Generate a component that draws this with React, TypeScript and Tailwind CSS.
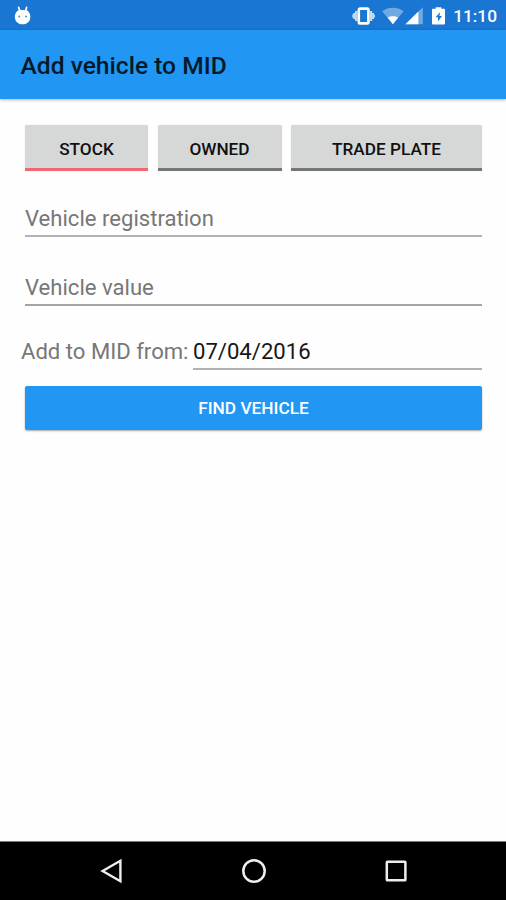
import React from 'react';

function MascotIcon() {
  return (
    <svg width="20" height="22" viewBox="0 0 20 22" className="shrink-0">
      <path d="M5.6 2.4 L6.8 5.8 M13.6 2.4 L12.6 5.8" stroke="#fff" strokeWidth="1.7" strokeLinecap="round" />
      <path
        d="M4.2 6 C5.6 4.6 13.6 4.6 15 6 C17 8 17.8 11 17.1 13.8 C16.4 17.4 13.4 19.3 9.6 19.3 C5.8 19.3 2.8 17.4 2.1 13.8 C1.4 11 2.2 8 4.2 6 Z"
        fill="#fff"
      />
      <circle cx="6.2" cy="11.4" r="1" fill="#4a92dd" />
      <circle cx="13" cy="11.4" r="1" fill="#4a92dd" />
    </svg>
  );
}

function StatusIcons() {
  return (
    <svg width="98" height="20" viewBox="0 0 98 20" className="shrink-0">
      {/* vibrate */}
      <path d="M0 10 L1.4 7 H3 V5 H5.4 V15 H3 V13 H1.4 Z M23.2 10 L21.8 7 H20.2 V5 H17.8 V15 H20.2 V13 H21.8 Z" fill="#fff" opacity=".72" />
      <rect x="6.8" y="2.6" width="9.6" height="14.8" rx="1.2" fill="#1976d2" stroke="#fff" strokeWidth="2.6" />
      {/* wifi */}
      <path d="M30.2 5.2 C36 .6 45.8 .6 51.6 5.2 L40.9 18.3 Z" fill="#fff" opacity=".38" />
      <path d="M35.6 11.5 C38.6 9.9 43.2 9.9 46.2 11.5 L40.9 18.3 Z" fill="#fff" />
      {/* cellular */}
      <path d="M53.4 18.3 L70.8 1.2 V18.3 Z" fill="#fff" opacity=".38" />
      <path d="M53.4 18.3 L66.4 5.5 V18.3 Z" fill="#fff" />
      {/* battery */}
      <path d="M80.9 2.8 H83.7 V1.2 H89.3 V2.8 H92.1 Q93 2.8 93 3.7 V17.6 Q93 18.5 92.1 18.5 H80.9 Q80 18.5 80 17.6 V3.7 Q80 2.8 80.9 2.8 Z" fill="#fff" />
      <path d="M88.2 6 L83.6 11.2 H86 V15.4 L90 9.9 H87.4 Z" fill="#1976d2" />
    </svg>
  );
}

function ToggleButton({ label, width, selected = false }: { label: string; width: string; selected?: boolean }) {
  return (
    <button
      className={`${width} h-[46px] shrink-0 rounded-t-[2px] border-b-[3px] bg-[#d6d8d7] pt-[7px] text-[17.2px] font-medium text-[#111] shadow-[0_0_1px_rgba(0,0,0,0.2)] ${
        selected ? 'border-[#ee6a70]' : 'border-[#757777]'
      }`}
    >
      {label}
    </button>
  );
}

export default function App() {
  return (
    <div className="flex h-[900px] w-[506px] flex-col overflow-hidden bg-[#fefefe] font-['Roboto',sans-serif]">
      <header className="flex h-[30px] shrink-0 items-center bg-[#1976d2] pl-[13px] pr-[9px]">
        <div className="pt-[1px]">
          <MascotIcon />
        </div>
        <div className="ml-auto flex items-center gap-[3px] pt-[2px]">
          <StatusIcons />
          <span className="text-[17.3px] font-medium leading-5 text-white">11:10</span>
        </div>
      </header>
      <div className="flex h-[69px] shrink-0 items-center bg-[#2196f3] pl-[20.5px] pt-[3px] shadow-[0_1px_3px_rgba(0,0,0,0.3)]">
        <h1 className="text-[24.6px] font-medium leading-8 text-[#041a28]">Add vehicle to MID</h1>
      </div>

      <main className="flex flex-1 flex-col pl-[25px] pr-[24px] pt-[26px]">
        <div className="flex justify-between">
          <ToggleButton label="STOCK" width="w-[123px]" selected />
          <ToggleButton label="OWNED" width="w-[124px]" />
          <ToggleButton label="TRADE PLATE" width="w-[191px]" />
        </div>
        <div className="mt-[33px] h-[33px] border-b-2 border-[#b2b2b2] text-[22.1px] leading-[28px] text-[#777]">
          Vehicle registration
        </div>
        <div className="mt-[36px] h-[33px] border-b-2 border-[#a5a5a5] text-[22.1px] leading-[28px] text-[#777]">
          Vehicle value
        </div>
        <div className="-ml-[4px] mt-[31px] flex h-[33px] text-[22.1px] leading-[28px]">
          <span className="w-[172px] shrink-0 whitespace-nowrap text-[#777]">Add to MID from:</span>
          <span className="flex-1 border-b-2 border-[#b2b2b2] text-[#171717]">07/04/2016</span>
        </div>
        <button className="mt-[16px] h-[44px] rounded-[2px] bg-[#2196f3] pt-[2px] text-[17.3px] font-medium text-white shadow-[0_1px_2px_rgba(0,0,0,0.35)]">
          FIND VEHICLE
        </button>
      </main>

      <nav className="flex h-[59px] shrink-0 items-center justify-center gap-[117.5px] border-t border-[#777] bg-black pl-[2px]">
        <svg width="24" height="26" viewBox="0 0 24 26" fill="none" stroke="#eee" strokeWidth="2.4">
          <path d="M2.6 13 L20.4 2.8 V23.2 Z" />
        </svg>
        <svg width="26" height="26" viewBox="0 0 26 26" fill="none" stroke="#eee" strokeWidth="2.5">
          <circle cx="13" cy="13" r="10.7" />
        </svg>
        <svg width="24" height="26" viewBox="0 0 24 26" fill="none" stroke="#eee" strokeWidth="2.5">
          <rect x="1.8" y="3.7" width="18.6" height="18.6" rx=".6" />
        </svg>
      </nav>
    </div>
  );
}
